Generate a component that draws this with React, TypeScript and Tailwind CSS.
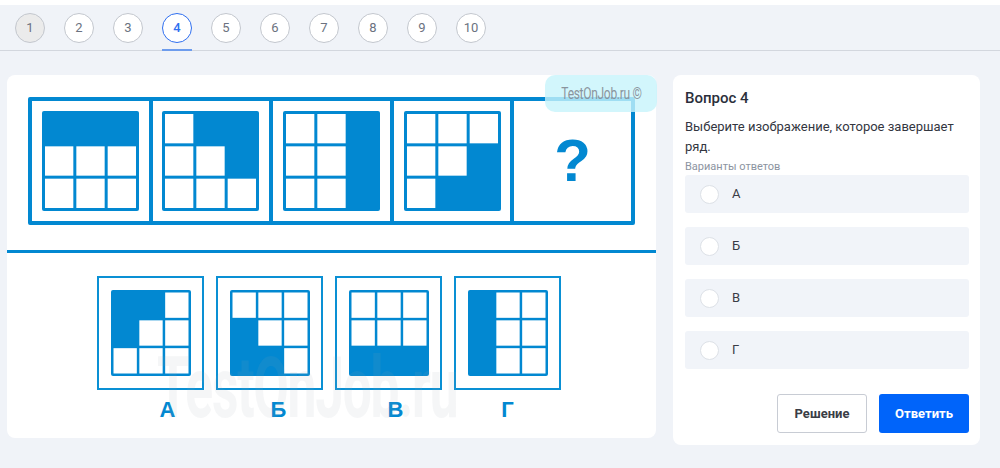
import React from 'react';

const BLUE = '#0288d1';

type Mask = number[];

const Grid: React.FC<{ mask: Mask; w: number; h: number; line: number }> = ({ mask, w, h, line }) => {
  const cw = (w - 4 * line) / 3;
  const ch = (h - 4 * line) / 3;
  return (
    <svg width={w} height={h} viewBox={`0 0 ${w} ${h}`}>
      <rect x={0} y={0} width={w} height={h} rx={2} fill={BLUE} />
      {mask.map((f, i) => {
        if (f) return null;
        const r = Math.floor(i / 3);
        const c = i % 3;
        return (
          <rect
            key={i}
            x={line + c * (cw + line)}
            y={line + r * (ch + line)}
            width={cw}
            height={ch}
            fill="#ffffff"
          />
        );
      })}
    </svg>
  );
};

const sequence: Mask[] = [
  [1, 1, 1, 0, 0, 0, 0, 0, 0],
  [0, 1, 1, 0, 0, 1, 0, 0, 0],
  [0, 0, 1, 0, 0, 1, 0, 0, 1],
  [0, 0, 0, 0, 0, 1, 0, 1, 1],
];

const options: { label: string; mask: Mask; shift: string }[] = [
  { label: 'А', mask: [1, 1, 0, 1, 0, 0, 0, 0, 0], shift: 'pl-[34px]' },
  { label: 'Б', mask: [0, 0, 0, 1, 0, 0, 1, 1, 0], shift: 'pl-[18px]' },
  { label: 'В', mask: [0, 0, 0, 0, 0, 0, 1, 1, 1], shift: 'pl-[14px]' },
  { label: 'Г', mask: [1, 0, 0, 1, 0, 0, 1, 0, 0], shift: 'pl-0' },
];

const pages = [1, 2, 3, 4, 5, 6, 7, 8, 9, 10];

const App: React.FC = () => {
  return (
    <div className="w-[1000px] h-[468px] bg-[#f0f3f8] overflow-hidden" style={{ fontFamily: 'Roboto, "Noto Sans", sans-serif' }}>
      {/* pager */}
      <div className="h-[5px] bg-white" />
      <div className="h-[46px] border-b border-[#d3d7de] flex items-start pl-[15px] gap-[19px] pt-[8px]">
        {pages.map(p => (
          <div key={p} className="relative h-[38px]">
            <div
              className={`w-[30px] h-[30px] rounded-full border flex items-center justify-center text-[13px] ${
                p === 4
                  ? 'border-[#2f6ff0] text-[#2f6ff0] bg-white font-medium'
                  : p === 1
                  ? 'border-[#c3c7ce] text-[#6b7280] bg-[#ebebeb]'
                  : 'border-[#c3c7ce] text-[#6b7280] bg-white'
              }`}
            >
              {p}
            </div>
            {p === 4 && <div className="absolute left-0 bottom-0 w-[30px] h-[2px] bg-[#6d9ced]" />}
          </div>
        ))}
      </div>

      <div className="flex items-start pt-[24px] pl-[7px] gap-[17px]">
        {/* left card */}
        <div className="relative w-[649px] h-[363px] bg-white rounded-lg">
          <div className="pt-[22px] pl-[21px]">
            <div className="w-[607px] h-[128px] border-4 border-[#0288d1] rounded-[2px] flex">
              {sequence.map((m, i) => (
                <div key={i} className={`flex-1 flex items-center justify-center ${i > 0 ? 'border-l-4 border-[#0288d1]' : ''}`}>
                  <Grid mask={m} w={97} h={100} line={3} />
                </div>
              ))}
              <div className="flex-1 border-l-4 border-[#0288d1] flex items-center justify-center">
                <span className="text-[60px] font-bold text-[#0288d1] leading-none" style={{ fontFamily: '"Liberation Sans", Arial, sans-serif' }}>
                  ?
                </span>
              </div>
            </div>
          </div>

          <div className="mt-[25px] h-[3px] bg-[#0288d1]" />

          <div className="flex justify-start pl-[90px] gap-[12px] mt-[23px]">
            {options.map(o => (
              <div key={o.label} className="flex flex-col items-center">
                <div className="w-[107px] h-[114px] border-2 border-[#0a90d4] flex items-center justify-center">
                  <Grid mask={o.mask} w={80} h={86} line={2.5} />
                </div>
                <div className={`${o.shift} mt-[6px] text-[22px] font-bold text-[#0288d1] leading-[28px]`} style={{ fontFamily: '"Liberation Sans", Arial, sans-serif' }}>
                  {o.label}
                </div>
              </div>
            ))}
          </div>

          {/* watermarks */}
          <div
            className="absolute left-[150px] top-[270px] text-[86px] leading-none font-bold text-[#9ca3af]/10 pointer-events-none origin-left scale-x-[0.6] tracking-tight"
            style={{ fontFamily: 'Roboto, sans-serif' }}
          >
            TestOnJob.ru
          </div>
          <div className="absolute left-[538px] top-0 w-[112px] h-[37px] rounded-[10px] bg-[#c7f4fb]/80 flex items-center justify-center pointer-events-none">
            <span className="text-[16px] text-[#8a949d] origin-center scale-x-[0.75] whitespace-nowrap tracking-tight">TestOnJob.ru ©</span>
          </div>
        </div>

        {/* right card */}
        <div className="w-[307px] h-[370px] bg-white rounded-lg pt-[13px] pl-[12px] pr-[11px] flex flex-col">
          <div className="text-[15px] font-medium text-[#2b2f3b] leading-[20px]">Вопрос 4</div>
          <div className="mt-[9px] text-[13px] text-[#33363f] leading-[20px]">
            Выберите изображение, которое завершает ряд.
          </div>
          <div className="text-[11px] text-[#8c94a1] leading-[14px] mt-[3px]">Варианты ответов</div>
          <div className="flex flex-col gap-[14px] mt-[1px]">
            {['А', 'Б', 'В', 'Г'].map(l => (
              <div key={l} className="h-[38px] w-[284px] bg-[#f1f4f9] rounded-[3px] flex items-center pl-[15px]">
                <div className="w-[19px] h-[19px] rounded-full bg-white border border-[#dde1e7]" />
                <span className="ml-[13px] text-[13px] text-[#3a3d46]">{l}</span>
              </div>
            ))}
          </div>
          <div className="mt-[25px] flex justify-end gap-[12px]">
            <button className="w-[90px] h-[39px] border border-[#c8ccd4] rounded-[3px] bg-white text-[13px] font-bold text-[#3a3d46]">
              Решение
            </button>
            <button className="w-[90px] h-[39px] rounded-[3px] bg-[#0064fa] text-[13px] font-bold text-white">
              Ответить
            </button>
          </div>
        </div>
      </div>
    </div>
  );
};

export default App;
